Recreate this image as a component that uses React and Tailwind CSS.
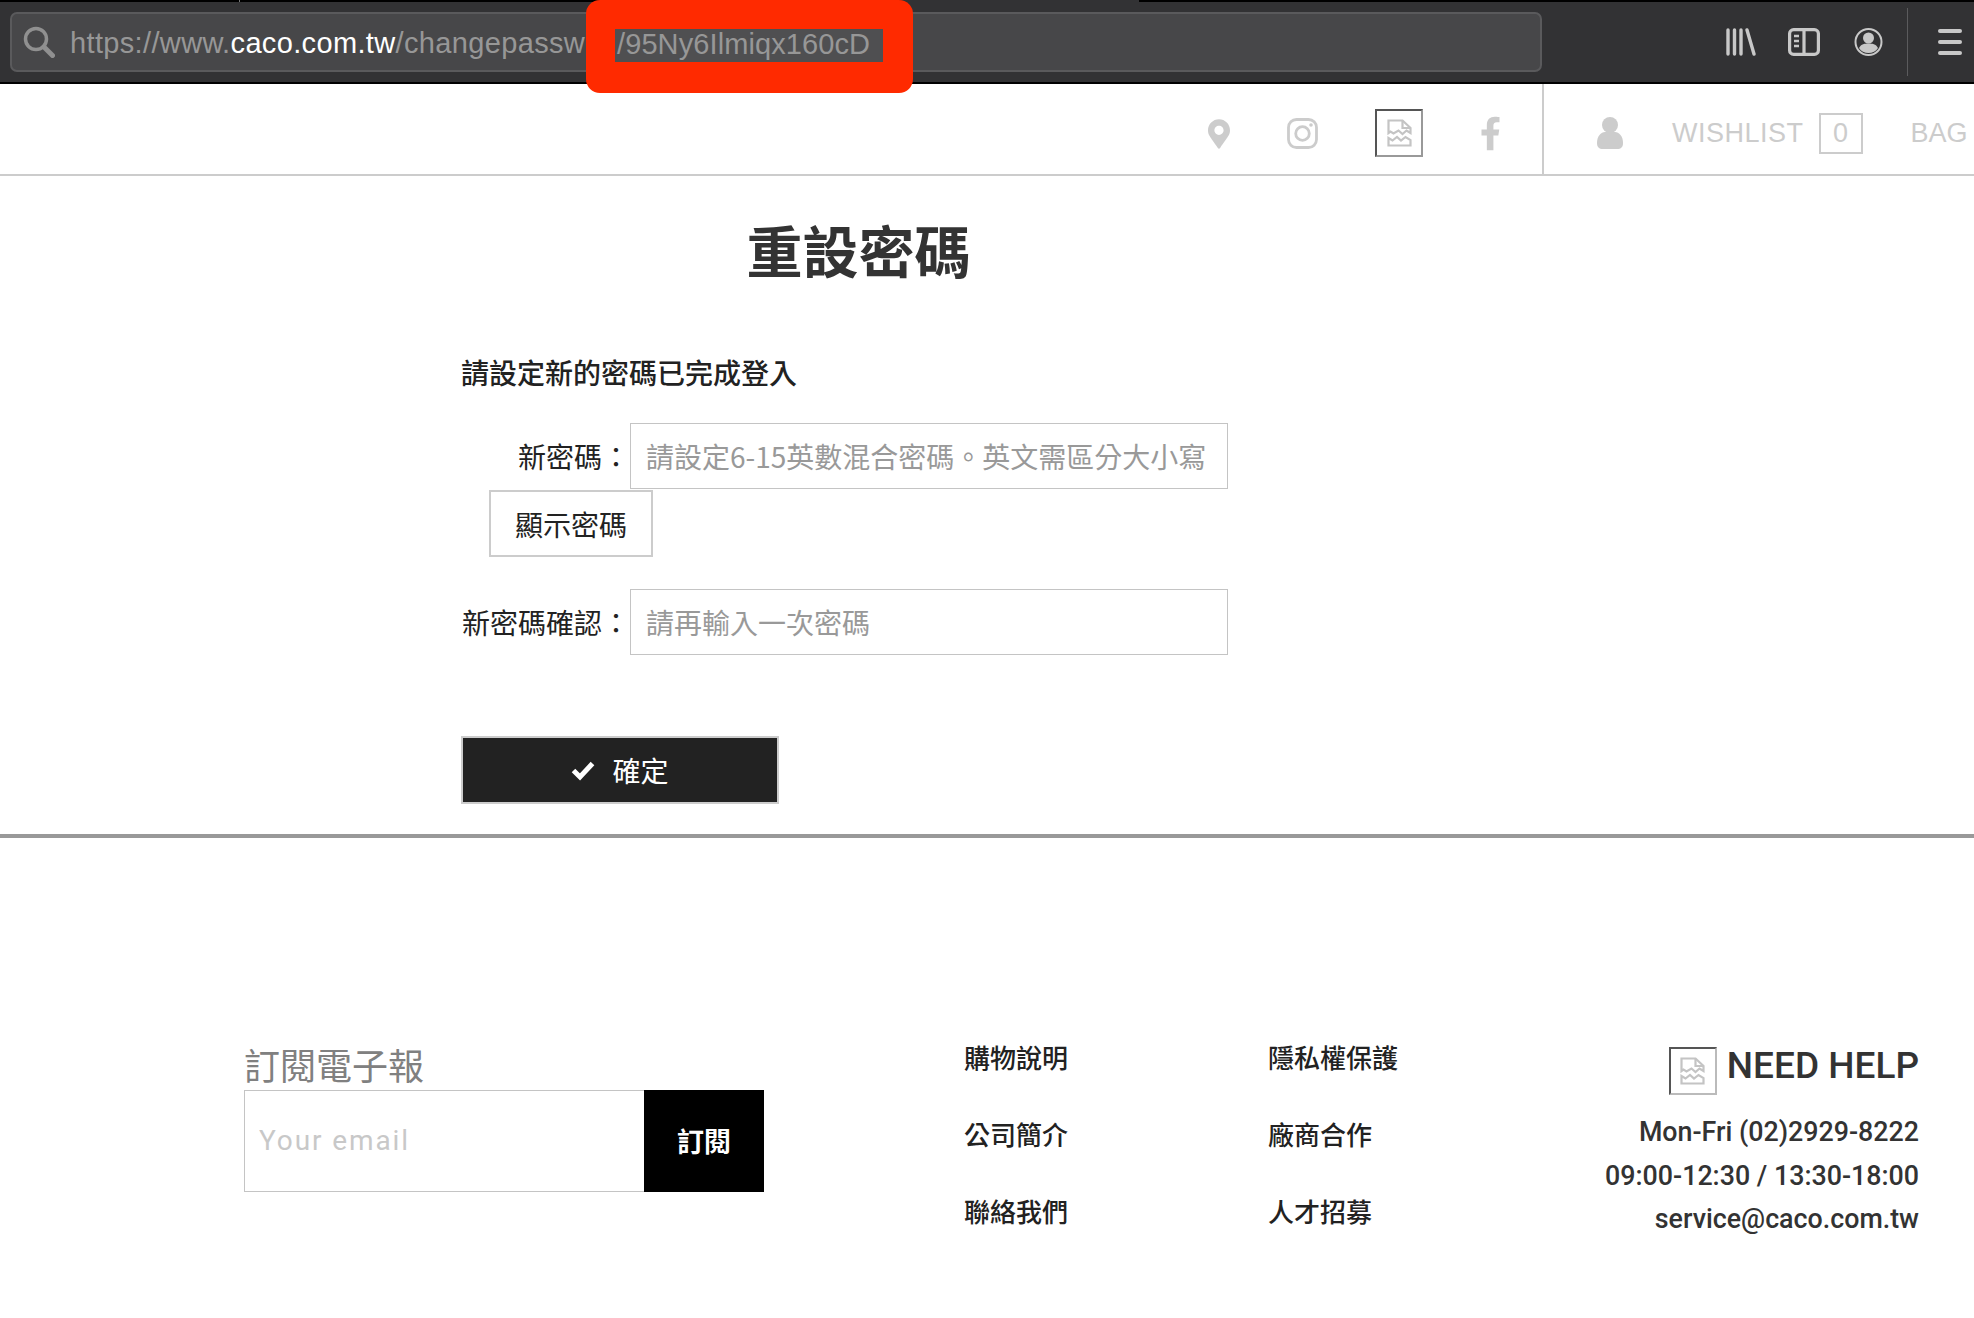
import React from "react";
import { FaFacebookF, FaMapMarkerAlt } from "react-icons/fa";

const cjk = "font-['Noto_Sans_CJK_TC',sans-serif]";
const robo = "font-['Roboto','Noto_Sans_CJK_TC',sans-serif]";

const BrokenImage = ({ className }) => (
  <svg viewBox="0 0 25 28" fill="none" stroke="#c4c4c4" strokeWidth="2.200" className={className}>
    <path d="M1.500 14V1.500h14l8 7.500v5l-4-2.500-4 3.500-4-3.500-5 3-3-2z" />
    <path d="M15.500 1.500v7.500h8" />
    <path d="M1.500 26.500V19l4 2.500 4.500-3.500 4 3.500 4.500-3.500 5 3v5.500z" />
  </svg>
);

const FormRow = ({ label, placeholder }) => (
  <div className="flex items-center">
    <label className="w-[169px] text-right text-[28px] text-[#222] whitespace-nowrap">{label}</label>
    <input
      placeholder={placeholder}
      className={`w-[598px] h-[66px] border-[1.5px] border-[#c4c4c4] px-[15px] text-[28px] outline-none placeholder:text-[#999] ${cjk}`}
    />
  </div>
);

const links = [
  ["購物說明", "公司簡介", "聯絡我們"],
  ["隱私權保護", "廠商合作", "人才招募"],
];

export default function App() {
  return (
    <div className={`w-[1974px] h-[1318px] bg-white overflow-hidden ${cjk}`}>
      {/* browser toolbar */}
      <div className="relative h-[84px] bg-[#323234] border-t-2 border-b-2 border-t-black border-b-black flex items-center">
        <div className="absolute left-[900px] top-[-2px] w-[239px] h-[2px] bg-[#323234]" />
        <div className="absolute left-[239px] top-[-2px] w-[1px] h-[2px] bg-[#777]" />
        <div className="ml-[10px] w-[1532px] h-[60px] rounded-[7px] bg-[#474749] border-2 border-[#5a5a5c] flex items-center pl-[11px]">
          <svg viewBox="0 0 32 32" className="w-[32px] h-[32px] text-[#909090]" fill="none" stroke="currentColor">
            <circle cx="13" cy="13" r="10.500" strokeWidth="3.500" />
            <path d="M21 21l8.500 8.500" strokeWidth="5" strokeLinecap="round" />
          </svg>
          <div className="ml-[15px] mt-[3px] text-[29px] tracking-[0.35px] text-[#979797] font-['Liberation_Sans',sans-serif] whitespace-nowrap">
            https://www.<span className="text-white">caco.com.tw</span>/changepassword
          </div>
        </div>
        <div className="ml-auto flex items-center text-[#c8c8c8]">
          <svg viewBox="0 0 30 28" className="w-[30px] h-[28px] mr-[32px]" fill="none" stroke="currentColor" strokeWidth="3.400" strokeLinecap="round">
            <path d="M2 2v24M8.500 2v24M15 2v24M21 2l7 24" />
          </svg>
          <svg viewBox="0 0 32 28" className="w-[32px] h-[28px] mr-[34px]" fill="none" stroke="currentColor" strokeWidth="3.200">
            <rect x="1.600" y="1.600" width="28.800" height="24.800" rx="4" />
            <path d="M16 2v24" />
            <path d="M6 8h5M6 13h5M6 18h5" strokeWidth="2.400" />
          </svg>
          <svg viewBox="0 0 29 28" className="w-[29px] h-[28px] mr-[24px]" fill="none">
            <circle cx="14.500" cy="14" r="13" stroke="currentColor" strokeWidth="2" />
            <circle cx="14.500" cy="10" r="5.500" fill="currentColor" />
            <path d="M5 20c2-4 6-4.500 9.500-4.500S22 16 24 20c-2 3.500-5.500 5-9.500 5S7 23.500 5 20z" fill="currentColor" />
          </svg>
          <div className="w-[1px] h-[68px] bg-[#5b5b5d] mr-[30px]" />
          <div className="flex flex-col gap-[7px] mr-[12px]">
            <div className="w-[24px] h-[4px] rounded-full bg-current" />
            <div className="w-[24px] h-[4px] rounded-full bg-current" />
            <div className="w-[24px] h-[4px] rounded-full bg-current" />
          </div>
        </div>
        {/* red redaction */}
        <div className="absolute left-[586px] top-[-2px] w-[327px] h-[93px] rounded-[14px] bg-[#ff2a00] flex items-center justify-start pl-[29px]">
          <div className="w-[268px] h-[33px] mt-[-2px] bg-[#4f4f51] text-[29px] leading-[31px] pl-[2px] text-[#979797] tracking-[0.1px] font-['Liberation_Sans',sans-serif] whitespace-nowrap">
            /95Ny6Ilmiqx160cD
          </div>
        </div>
      </div>

      {/* site header */}
      <header className="h-[92px] border-b-2 border-[#cccccc] flex text-[#cccccc]">
        <div className="ml-auto h-full flex items-center pt-[8px]">
          <FaMapMarkerAlt className="w-[22px] h-[32px] mr-[57px] mt-[1px]" />
          <svg viewBox="0 0 31 31" className="w-[31px] h-[31px] mr-[57px]" fill="none" stroke="currentColor" strokeWidth="2.800">
            <rect x="1.500" y="1.500" width="28" height="28" rx="8" />
            <circle cx="15.500" cy="15.500" r="6.800" />
            <circle cx="24" cy="7" r="1.800" fill="currentColor" stroke="none" />
          </svg>
          <div className="w-[48px] h-[48px] border-2 border-t-[#555] border-l-[#555] border-r-[#999] border-b-[#999] flex items-center justify-center mr-[57px]">
            <BrokenImage className="w-[25px] h-[28px]" />
          </div>
          <FaFacebookF className="w-[21px] h-[35px] mr-[41px]" />
        </div>
        <div className="w-[432px] h-full border-l-2 border-[#cccccc] flex items-center pl-[53px] pt-[8px] font-['Liberation_Sans',sans-serif] text-[27px]">
          <svg viewBox="0 0 26 32" className="w-[26px] h-[32px] mr-[49px]" fill="currentColor">
            <circle cx="13" cy="8" r="8" />
            <path d="M0 26c0-7 4-11 8-11h10c4 0 8 4 8 11 0 4-2 6-6 6H6c-4 0-6-2-6-6z" />
          </svg>
          <span className="tracking-[0.5px]">WISHLIST</span>
          <span className="w-[44px] h-[41px] ml-[15px] border-2 border-[#cccccc] flex items-center justify-center">0</span>
          <span className="ml-[48px]">BAG</span>
        </div>
      </header>

      {/* form */}
      <main className="h-[662px] border-b-4 border-[#999999] pl-[461px] pt-[33px]">
        <h1 className="w-[795px] text-center text-[56px] leading-[80px] font-bold text-[#333]">重設密碼</h1>
        <p className="mt-[63px] text-[28px] leading-[40px] font-medium text-[#222]">請設定新的密碼已完成登入</p>
        <div className="mt-[31px]">
          <FormRow label="新密碼：" placeholder="請設定6-15英數混合密碼。英文需區分大小寫" />
        </div>
        <button className="block ml-[28px] mt-[1px] w-[164px] h-[67px] border-2 border-[#ccc] text-[28px] text-[#222]">顯示密碼</button>
        <div className="mt-[32px]">
          <FormRow label="新密碼確認：" placeholder="請再輸入一次密碼" />
        </div>
        <button className="mt-[81px] w-[318px] h-[68px] border-2 border-[#ccc] bg-[#222] text-white text-[28px] flex items-center justify-center gap-[17px]">
          <svg viewBox="0 0 24 22" className="w-[24px] h-[22px]" fill="none" stroke="currentColor" strokeWidth="5">
            <path d="M2.500 11.500l6.500 6.500L21.500 4.500" />
          </svg>
          確定
        </button>
      </main>

      {/* footer */}
      <footer className="pt-[204px] flex items-start">
        <div className="ml-[244px] w-[520px]">
          <h3 className="text-[36px] leading-[44px] mb-[4px] text-[#808080]">訂閱電子報</h3>
          <div className="flex h-[102px]">
            <input
              placeholder="Your email"
              className={`flex-1 min-w-0 border-[1.5px] border-r-0 border-[#c4c4c4] px-[14px] text-[28px] tracking-[1.9px] outline-none placeholder:text-[#c8c8c8] ${robo}`}
            />
            <button className="w-[120px] bg-black text-white text-[27px] font-bold">訂閱</button>
          </div>
        </div>
        <div className="ml-[200px] flex mt-[-5px]">
          {links.map((col, i) => (
            <ul key={i} className="w-[304px] flex flex-col gap-[37px]">
              {col.map((t) => (
                <li key={t} className="text-[26px] leading-[40px] font-medium text-[#222]">{t}</li>
              ))}
            </ul>
          ))}
        </div>
        <div className={`ml-auto mr-[55px] flex flex-col items-end text-[#333] font-medium ${robo}`}>
          <div className="flex items-center gap-[10px]">
            <div className="w-[48px] h-[48px] border-2 border-t-[#555] border-l-[#555] border-r-[#bbb] border-b-[#bbb] flex items-center justify-center">
              <BrokenImage className="w-[25px] h-[28px]" />
            </div>
            <span className="text-[37px] leading-[48px] mb-[9px]">NEED HELP</span>
          </div>
          <p className="text-[26.800px] leading-[43.500px] mt-[12px]">Mon-Fri (02)2929-8222</p>
          <p className="text-[26.800px] leading-[43.500px]">09:00-12:30 / 13:30-18:00</p>
          <p className="text-[26.800px] leading-[43.500px]">service@caco.com.tw</p>
        </div>
      </footer>
    </div>
  );
}
